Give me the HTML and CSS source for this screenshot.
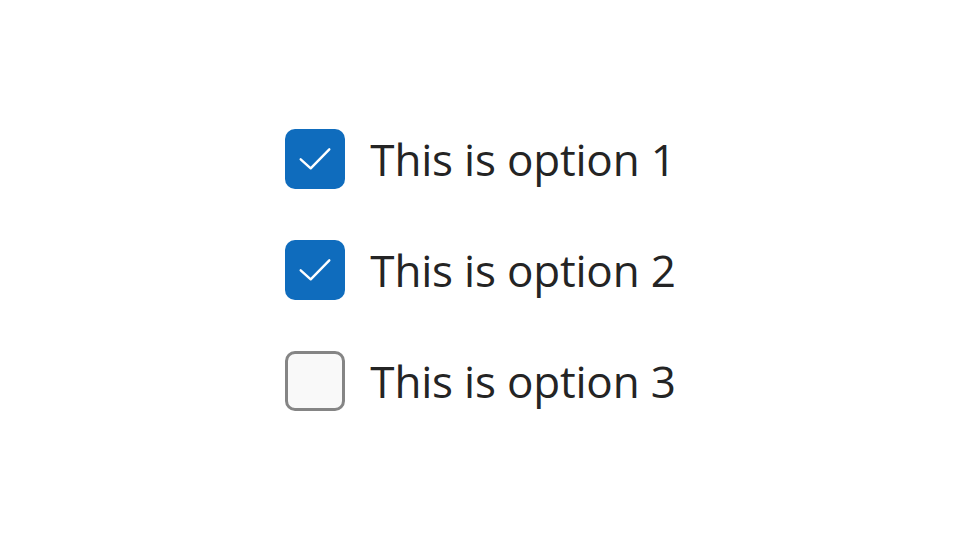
FILE: index.html
```html
<!DOCTYPE html>
<html>
<head>
<meta charset="utf-8">
<link rel="stylesheet" href="styles.css">
</head>
<body>
<div class="list">
  <label class="option">
    <span class="box checked">
      <svg viewBox="0 0 60 60" width="60" height="60"><path d="M15.7 30.3 L25.7 39.3 L44.3 20.3" fill="none" stroke="#fff" stroke-width="2.4" stroke-linecap="round" stroke-linejoin="round"/></svg>
    </span>
    <span class="text">This is option 1</span>
  </label>
  <label class="option">
    <span class="box checked">
      <svg viewBox="0 0 60 60" width="60" height="60"><path d="M15.7 30.3 L25.7 39.3 L44.3 20.3" fill="none" stroke="#fff" stroke-width="2.4" stroke-linecap="round" stroke-linejoin="round"/></svg>
    </span>
    <span class="text">This is option 2</span>
  </label>
  <label class="option">
    <span class="box"></span>
    <span class="text">This is option 3</span>
  </label>
</div>
</body>
</html>
```
FILE: styles.css
```css
html, body {
  margin: 0;
  padding: 0;
  background: #ffffff;
}
body {
  width: 960px;
  height: 540px;
  display: flex;
  align-items: center;
  justify-content: center;
  font-family: "Open Sans", "Noto Sans", sans-serif;
}
.list {
  display: flex;
  flex-direction: column;
  gap: 51px;
  margin-left: 1px;
}
.option {
  display: flex;
  align-items: center;
  gap: 25px;
  height: 60px;
}
.box {
  width: 60px;
  height: 60px;
  box-sizing: border-box;
  border-radius: 10px;
  border: 3px solid #858585;
  background: #f9f9f9;
  flex: none;
  display: block;
}
.box.checked {
  background: #0f6cbd;
  border: none;
}
.box svg {
  display: block;
}
.text {
  font-size: 44px;
  color: #242424;
  line-height: 60px;
  letter-spacing: -0.2px;
}
```
